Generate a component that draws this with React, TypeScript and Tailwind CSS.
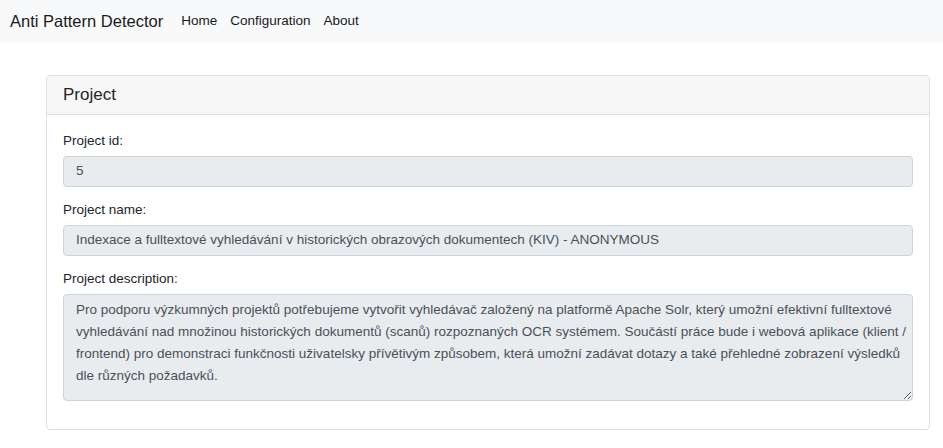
import React from 'react'

const description =
  'Pro podporu výzkumných projektů potřebujeme vytvořit vyhledávač založený na platformě Apache Solr, který umožní efektivní fulltextové vyhledávání nad množinou historických dokumentů (scanů) rozpoznaných OCR systémem. Součástí práce bude i webová aplikace (klient / frontend) pro demonstraci funkčnosti uživatelsky přívětivým způsobem, která umožní zadávat dotazy a také přehledné zobrazení výsledků dle různých požadavků.'

function Field({ label, children }: { label: string; children: React.ReactNode }) {
  return (
    <div className="mb-[13px]">
      <label className="block text-[13.5px] leading-[20px] text-[#212529] mb-[5px]">{label}</label>
      {children}
    </div>
  )
}

export default function App() {
  return (
    <div className="min-h-[448px] bg-white font-['Liberation_Sans',Arial,sans-serif] text-[#212529]">
      <nav className="h-[42px] bg-[#f8f9fa] flex items-center px-[10px]">
        <span className="text-[16.5px] text-[#1a1a1a] mr-[18px]">Anti Pattern Detector</span>
        <div className="flex items-center gap-[13px] text-[13.5px] text-[#1a1a1a]">
          <a>Home</a>
          <a>Configuration</a>
          <a>About</a>
        </div>
      </nav>

      <div className="pt-[33px] pl-[46px] pr-[13px]">
        <div className="border border-[#dfdfdf] rounded-[4px] bg-white">
          <div className="h-[39px] bg-[#f7f7f7] border-b border-[#dfdfdf] rounded-t-[4px] flex items-center px-[16px]">
            <h5 className="text-[17px] font-medium text-[#212529]">Project</h5>
          </div>
          <div className="px-[16px] pt-[16px] pb-[15px]">
            <Field label="Project id:">
              <div className="h-[31px] bg-[#e9ecef] border border-[#ced4da] rounded-[4px] px-[12px] flex items-center text-[13.5px] text-[#495057]">
                5
              </div>
            </Field>
            <Field label="Project name:">
              <div className="h-[31px] bg-[#e9ecef] border border-[#ced4da] rounded-[4px] px-[12px] flex items-center text-[13.5px] text-[#495057]">
                Indexace a fulltextové vyhledávání v historických obrazových dokumentech (KIV) - ANONYMOUS
              </div>
            </Field>
            <Field label="Project description:">
              <textarea
                disabled
                value={description}
                className="block w-full h-[107px] bg-[#e9ecef] border border-[#ced4da] rounded-[4px] pl-[12px] pr-[4px] py-[4px] text-[13.5px] leading-[22px] text-[#495057] resize-y"
              />
            </Field>
          </div>
        </div>
      </div>
    </div>
  )
}
